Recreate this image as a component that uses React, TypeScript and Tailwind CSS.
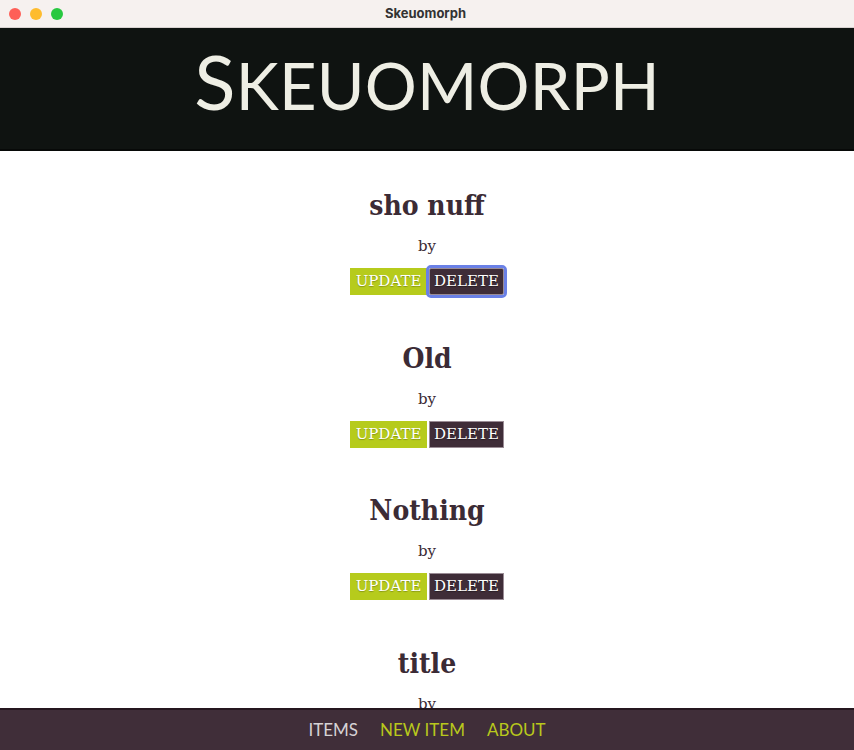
import React from "react";

const items = ["sho nuff", "Old", "Nothing", "title"];

export default function App() {
  return (
    <div className="w-[854px] h-[750px] flex flex-col overflow-hidden bg-white">
      {/* window title bar */}
      <div className="h-[28px] shrink-0 bg-[#f6f1ef] border-b border-[#d8d2d0] flex items-center relative">
        <div className="flex gap-[9px] pl-[9px]">
          <span className="w-[12px] h-[12px] rounded-full bg-[#fe5f57]" />
          <span className="w-[12px] h-[12px] rounded-full bg-[#febc2e]" />
          <span className="w-[12px] h-[12px] rounded-full bg-[#28c840]" />
        </div>
        <div className="flex-1 text-center pr-[66px] text-[13px] font-bold text-[#333] [font-family:Inter,'Liberation_Sans',sans-serif]">
          Skeuomorph
        </div>
      </div>

      {/* header */}
      <header className="h-[123px] shrink-0 bg-[#0f1311] border-b-2 border-[#070908] flex items-center justify-center">
        <h1 className="text-[#eeeee4] [font-family:Lato,sans-serif] font-normal leading-none tracking-[0.2px] flex items-baseline pb-[16px]">
          <span className="text-[76px]">S</span>
          <span className="text-[65px]">KEUOMORPH</span>
        </h1>
      </header>

      {/* list */}
      <main className="flex-1 overflow-hidden flex flex-col items-center pt-[35px] [font-family:'DejaVu_Serif',serif] text-[#3b2b35]">
        {items.map((t, i) => (
          <div key={t} className="flex flex-col items-center mb-[43.5px]">
            <h2 className="text-[28px] leading-[40px] font-bold [font-family:'DejaVu_Serif_Condensed','DejaVu_Serif',serif]">{t}</h2>
            <p className="text-[15px] leading-[20px] mt-[10px]">by</p>
            <div className="flex gap-[2px] mt-[12px]">
              <button className="h-[27px] w-[77px] bg-[#b6cb1c] text-white text-[15px] leading-none uppercase [text-shadow:0_1px_1px_rgba(0,0,0,0.25)]">
                Update
              </button>
              <button
                className={
                  "h-[27px] w-[75px] bg-[#3f2d38] text-white text-[15px] leading-none uppercase border border-[#9a8c95] [text-shadow:0_1px_1px_rgba(0,0,0,0.4)] " +
                  (i === 0 ? "outline-[3px] outline outline-[#6a80e6] rounded-[2px]" : "")
                }
              >
                Delete
              </button>
            </div>
          </div>
        ))}
      </main>

      {/* footer */}
      <footer className="h-[42px] shrink-0 bg-[#402e39] border-t-2 border-[#25171f] flex items-center justify-center gap-[22px] [font-family:Lato,sans-serif] text-[17px] leading-[20px] uppercase">
        <a className="text-[#d6d3d5]">Items</a>
        <a className="text-[#b9c81c]">New Item</a>
        <a className="text-[#b9c81c]">About</a>
      </footer>
    </div>
  );
}
